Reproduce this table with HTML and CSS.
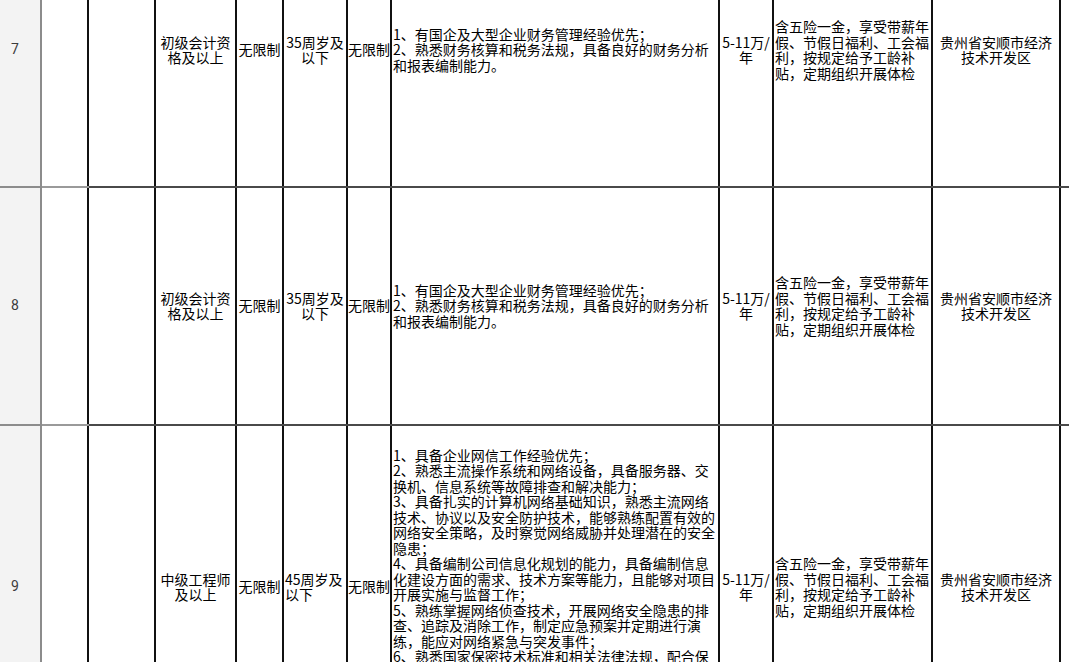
FILE: index.html
```html
<!DOCTYPE html>
<html lang="zh-CN">
<head>
<meta charset="utf-8">
<title>招聘岗位表</title>
<link rel="stylesheet" href="styles.css">
</head>
<body>
<div class="sheet">
<table class="grid">
  <colgroup>
    <col class="w-hd"><col class="w-c1"><col class="w-c2"><col class="w-c3"><col class="w-c4"><col class="w-c5"><col class="w-c6"><col class="w-c7"><col class="w-c8"><col class="w-c9"><col class="w-c10"><col class="w-c11">
  </colgroup>
  <tbody>
    <tr class="row-7">
      <th class="rh">7</th>
      <td class="blank"></td>
      <td class="empty"></td>
      <td class="ctr">初级会计资格及以上</td>
      <td class="ctr nw">无限制</td>
      <td class="ctr">35周岁及以下</td>
      <td class="ctr nw">无限制</td>
      <td class="lft">1、有国企及大型企业财务管理经验优先；<br>2、熟悉财务核算和税务法规，具备良好的财务分析和报表编制能力。</td>
      <td class="ctr">5-11万/年</td>
      <td class="lft">含五险一金，享受带薪年假、节假日福利、工会福利，按规定给予工龄补贴，定期组织开展体检</td>
      <td class="ctr">贵州省安顺市经济技术开发区</td>
      <td class="tail"></td>
    </tr>
    <tr class="row-8">
      <th class="rh">8</th>
      <td class="blank"></td>
      <td class="empty"></td>
      <td class="ctr">初级会计资格及以上</td>
      <td class="ctr nw">无限制</td>
      <td class="ctr">35周岁及以下</td>
      <td class="ctr nw">无限制</td>
      <td class="lft">1、有国企及大型企业财务管理经验优先；<br>2、熟悉财务核算和税务法规，具备良好的财务分析和报表编制能力。</td>
      <td class="ctr">5-11万/年</td>
      <td class="lft">含五险一金，享受带薪年假、节假日福利、工会福利，按规定给予工龄补贴，定期组织开展体检</td>
      <td class="ctr">贵州省安顺市经济技术开发区</td>
      <td class="tail"></td>
    </tr>
    <tr class="row-9">
      <th class="rh">9</th>
      <td class="blank"></td>
      <td class="empty"></td>
      <td class="ctr">中级工程师及以上</td>
      <td class="ctr nw">无限制</td>
      <td class="lft">45周岁及以下</td>
      <td class="ctr nw">无限制</td>
      <td class="lft">1、具备企业网信工作经验优先；<br>2、熟悉主流操作系统和网络设备，具备服务器、交换机、信息系统等故障排查和解决能力；<br>3、具备扎实的计算机网络基础知识，熟悉主流网络技术、协议以及安全防护技术，能够熟练配置有效的网络安全策略，及时察觉网络威胁并处理潜在的安全隐患；<br>4、具备编制公司信息化规划的能力，具备编制信息化建设方面的需求、技术方案等能力，且能够对项目开展实施与监督工作；<br>5、熟练掌握网络侦查技术，开展网络安全隐患的排查、追踪及消除工作，制定应急预案并定期进行演练，能应对网络紧急与突发事件；<br>6、熟悉国家保密技术标准和相关法律法规，配合保密部门开展信息系统保密检查及风险评估工作，做好涉密信息及载体的管理；<br>7、具有较强的责任心、保密意识和团队协作精神，能够承受一定的工作压力。</td>
      <td class="ctr">5-11万/年</td>
      <td class="lft">含五险一金，享受带薪年假、节假日福利、工会福利，按规定给予工龄补贴，定期组织开展体检</td>
      <td class="ctr">贵州省安顺市经济技术开发区</td>
      <td class="tail"></td>
    </tr>
  </tbody>
</table>
</div>
</body>
</html>
```

FILE: styles.css
```css
html, body {
  margin: 0;
  padding: 0;
  background: #ffffff;
  overflow: hidden;
}

.sheet {
  width: 1069px;
  height: 662px;
  overflow: hidden;
}

.grid {
  border-collapse: collapse;
  table-layout: fixed;
  width: 1120px;
  margin-top: -88px;
  font-family: "Noto Sans CJK SC", "Noto Sans", sans-serif;
  font-size: 14px;
  line-height: 15.5px;
  color: #000;
}

.w-hd { width: 41px; }
.w-c1 { width: 47px; }
.w-c2 { width: 67px; }
.w-c3 { width: 81px; }
.w-c4 { width: 47px; }
.w-c5 { width: 64px; }
.w-c6 { width: 44px; }
.w-c7 { width: 328px; }
.w-c8 { width: 54px; }
.w-c9 { width: 159px; }
.w-c10 { width: 128px; }
.w-c11 { width: 60px; }

.row-7 { height: 274px; }
.row-8 { height: 238px; }
.row-9 { height: 324px; }

.grid td {
  padding: 0 1px;
  vertical-align: middle;
  border-top: 2px solid #4a4a4a;
  border-bottom: 2px solid #4a4a4a;
  border-left: 2px solid #111;
  border-right: 2px solid #111;
  word-break: break-all;
}

.grid td.nw {
  white-space: nowrap;
  padding: 0;
}

.grid .rh {
  background: #f3f3f3;
  color: #3c3c3c;
  font-family: Roboto, "Noto Sans", sans-serif;
  font-weight: 400;
  font-size: 14px;
  text-align: left;
  padding: 0 0 0 11px;
  vertical-align: middle;
  border-top: 2px solid #8c8c8c;
  border-bottom: 2px solid #8c8c8c;
  border-right: 2px solid #8c8c8c;
  border-left: none;
}

.grid td.blank {
  border-left: 2px solid #8c8c8c;
  border-top: 2px solid #9a9a9a;
  border-bottom: 2px solid #9a9a9a;
}

.grid td.tail {
  border-right: none;
}

.ctr { text-align: center; }
.lft { text-align: left; }
```
